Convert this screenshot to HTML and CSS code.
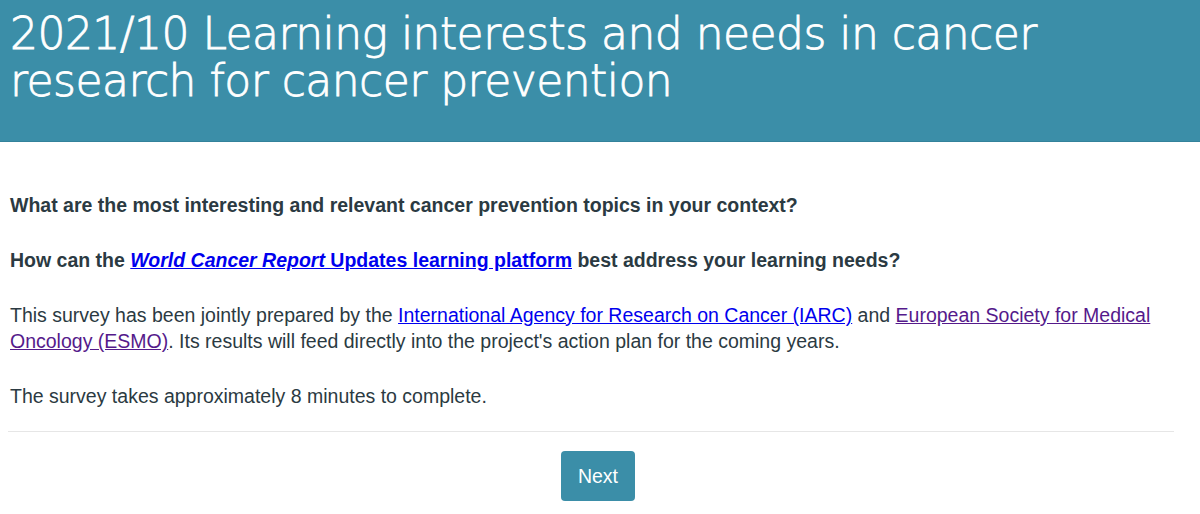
FILE: index.html
```html
<!DOCTYPE html>
<html lang="en">
<head>
<meta charset="utf-8">
<title>Survey</title>
<link rel="stylesheet" href="styles.css">
</head>
<body>
<header class="banner">
  <h1 class="title">2021/10 Learning interests and needs in cancer research for cancer prevention</h1>
</header>
<main class="content">
  <p class="lead">What are the most interesting and relevant cancer prevention topics in your context?</p>
  <p class="lead">How can the <a class="link" href="#"><em>World Cancer Report</em> Updates learning platform</a> best address your learning needs?</p>
  <p class="text">This survey has been jointly prepared by the <a class="link" href="#">International Agency for Research on Cancer (IARC)</a> and <a class="link visited" href="#">European Society for Medical Oncology (ESMO)</a>. Its results will feed directly into the project's action plan for the coming years.</p>
  <p class="text">The survey takes approximately 8 minutes to complete.</p>
  <hr class="rule">
  <div class="actions">
    <button class="next" type="button">Next</button>
  </div>
</main>
</body>
</html>
```
FILE: styles.css
```css
html, body {
  margin: 0;
  padding: 0;
  background: #ffffff;
}
body {
  font-family: "Liberation Sans", Arial, sans-serif;
  color: #2b3a42;
}
.banner {
  background: #3b8ea8;
  height: 141px;
  border-bottom: 1px solid #33829b;
  padding: 0 10px;
  box-sizing: content-box;
}
.title {
  margin: 0;
  padding-top: 10px;
  font-family: "DejaVu Sans", sans-serif;
  font-weight: 200;
  font-size: 44px;
  letter-spacing: -0.55px;
  line-height: 47px;
  color: #ffffff;
  -webkit-text-stroke: 0.8px #ffffff;
}
.content {
  padding: 0 28px 0 10px;
}
.lead, .text {
  margin: 29px 0 0;
  font-size: 19.5px;
  line-height: 26px;
}
.content > .lead:first-child {
  margin-top: 50px;
}
.lead {
  font-weight: bold;
}
.link {
  color: #0000ee;
  text-decoration: underline;
}
.link.visited {
  color: #551a8b;
}
.rule {
  margin: 22px -2px 0;
  border: 0;
  border-top: 1px solid #e6e6e6;
}
.actions {
  display: flex;
  justify-content: center;
  padding: 19px 0 0 14px;
}
.next {
  background: #3b8ea8;
  color: #ffffff;
  border: 0;
  border-radius: 4px;
  width: 74px;
  height: 50px;
  font-family: "Liberation Sans", Arial, sans-serif;
  font-size: 19.5px;
}
```
